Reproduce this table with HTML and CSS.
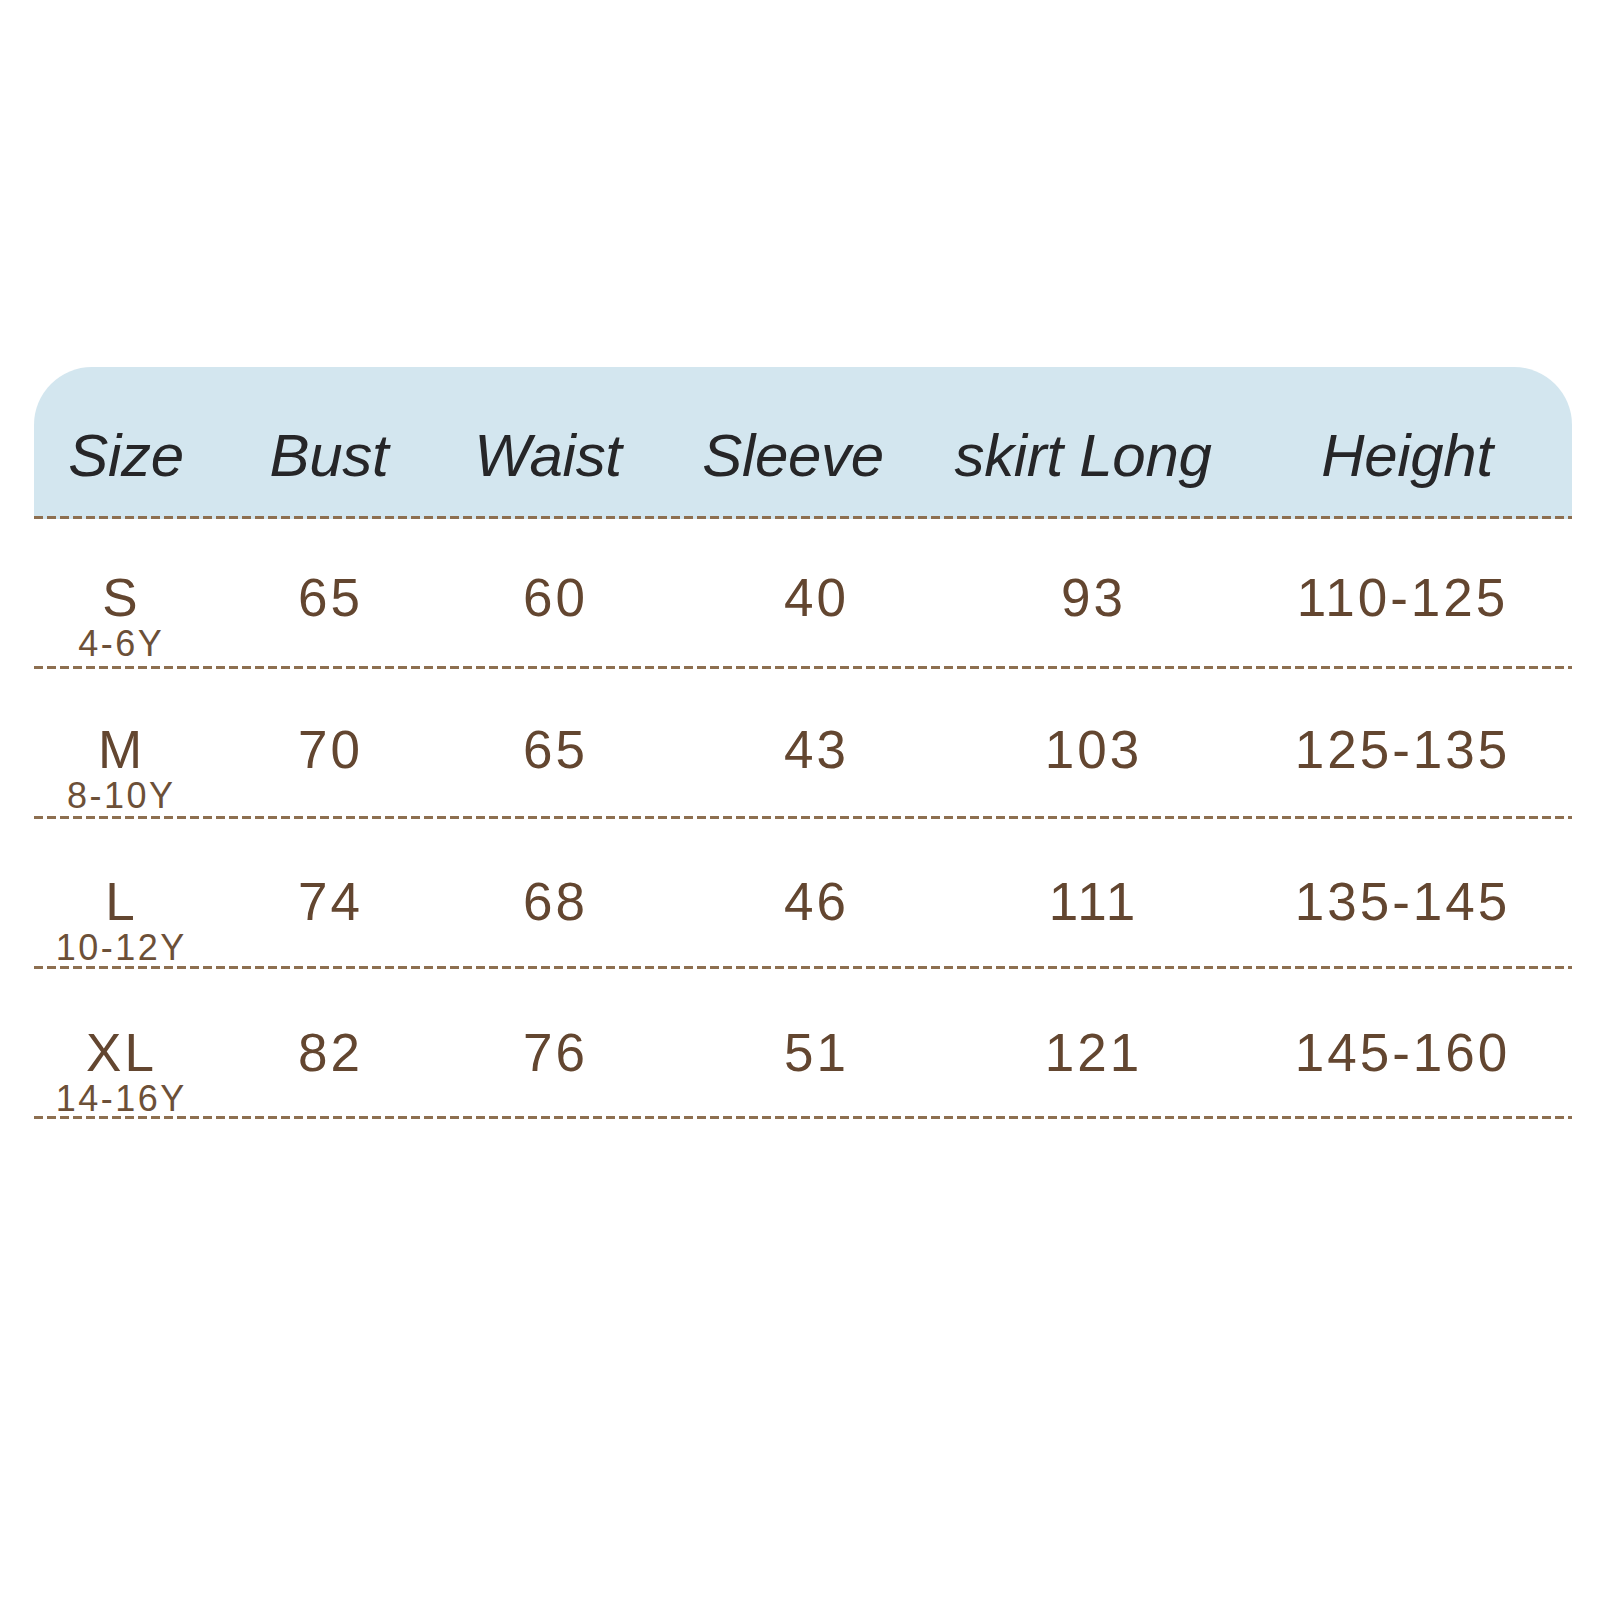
FILE: index.html
```html
<!DOCTYPE html>
<html lang="en">
<head>
<meta charset="utf-8">
<title>Size Chart</title>
<link rel="stylesheet" href="styles.css">
</head>
<body>
<div class="chart">
  <div class="row head">
    <div class="h">Size</div>
    <div class="h">Bust</div>
    <div class="h">Waist</div>
    <div class="h">Sleeve</div>
    <div class="h">skirt Long</div>
    <div class="h">Height</div>
  </div>
  <div class="row data r1">
    <div class="cell size"><span class="v">S</span><span class="age">4-6Y</span></div>
    <div class="cell"><span class="v">65</span></div>
    <div class="cell"><span class="v">60</span></div>
    <div class="cell"><span class="v">40</span></div>
    <div class="cell"><span class="v">93</span></div>
    <div class="cell"><span class="v">110-125</span></div>
  </div>
  <div class="row data r2">
    <div class="cell size"><span class="v">M</span><span class="age">8-10Y</span></div>
    <div class="cell"><span class="v">70</span></div>
    <div class="cell"><span class="v">65</span></div>
    <div class="cell"><span class="v">43</span></div>
    <div class="cell"><span class="v">103</span></div>
    <div class="cell"><span class="v">125-135</span></div>
  </div>
  <div class="row data r3">
    <div class="cell size"><span class="v">L</span><span class="age">10-12Y</span></div>
    <div class="cell"><span class="v">74</span></div>
    <div class="cell"><span class="v">68</span></div>
    <div class="cell"><span class="v">46</span></div>
    <div class="cell"><span class="v">111</span></div>
    <div class="cell"><span class="v">135-145</span></div>
  </div>
  <div class="row data r4">
    <div class="cell size"><span class="v">XL</span><span class="age">14-16Y</span></div>
    <div class="cell"><span class="v">82</span></div>
    <div class="cell"><span class="v">76</span></div>
    <div class="cell"><span class="v">51</span></div>
    <div class="cell"><span class="v">121</span></div>
    <div class="cell"><span class="v">145-160</span></div>
  </div>
</div>
</body>
</html>
```
FILE: styles.css
```css
html, body {
  margin: 0;
  padding: 0;
  background: #ffffff;
}

body {
  font-family: "Liberation Sans", Arial, sans-serif;
}

.chart {
  margin: 367px 0 0 34px;
  width: 1538px;
}

.row {
  display: grid;
  grid-template-columns: 172px 246px 204px 318px 256px 342px;
  box-sizing: border-box;
  height: 150px;
  background-image: linear-gradient(to right, #8d6f50 0, #8d6f50 9px, transparent 9px, transparent 13px);
  background-size: 13px 3px;
  background-repeat: repeat-x;
  background-position: left bottom;
}

.head {
  height: 152px;
  border-radius: 58px 58px 0 0;
  background-color: #d3e6ef;
  padding-top: 59px;
}

.h {
  display: flex;
  justify-content: center;
  align-items: flex-start;
  white-space: nowrap;
  font-style: italic;
  font-size: 60px;
  line-height: 60px;
  color: #262628;
  letter-spacing: -0.3px;
}

.h:nth-child(1) { padding-left: 12px; }
.h:nth-child(3) { padding-right: 12px; }
.h:nth-child(4) { padding-right: 44px; }
.h:nth-child(5) { padding-right: 38px; }
.h:nth-child(6) { padding-left: 12px; }

.cell {
  display: flex;
  flex-direction: column;
  align-items: center;
  color: #634630;
}

.cell:nth-child(5) { padding-right: 20px; }

.r1 .cell { padding-top: 52px; }
.r2 .cell { padding-top: 54px; }
.r3 .cell { padding-top: 56px; }
.r4 .cell { padding-top: 57px; }

.v {
  font-size: 53px;
  line-height: 53px;
  letter-spacing: 3px;
  margin-right: -3px;
}

.age {
  margin-top: 2px;
  font-size: 36px;
  line-height: 36px;
  letter-spacing: 2.5px;
  margin-right: -2.5px;
  color: #6c5038;
}
```
